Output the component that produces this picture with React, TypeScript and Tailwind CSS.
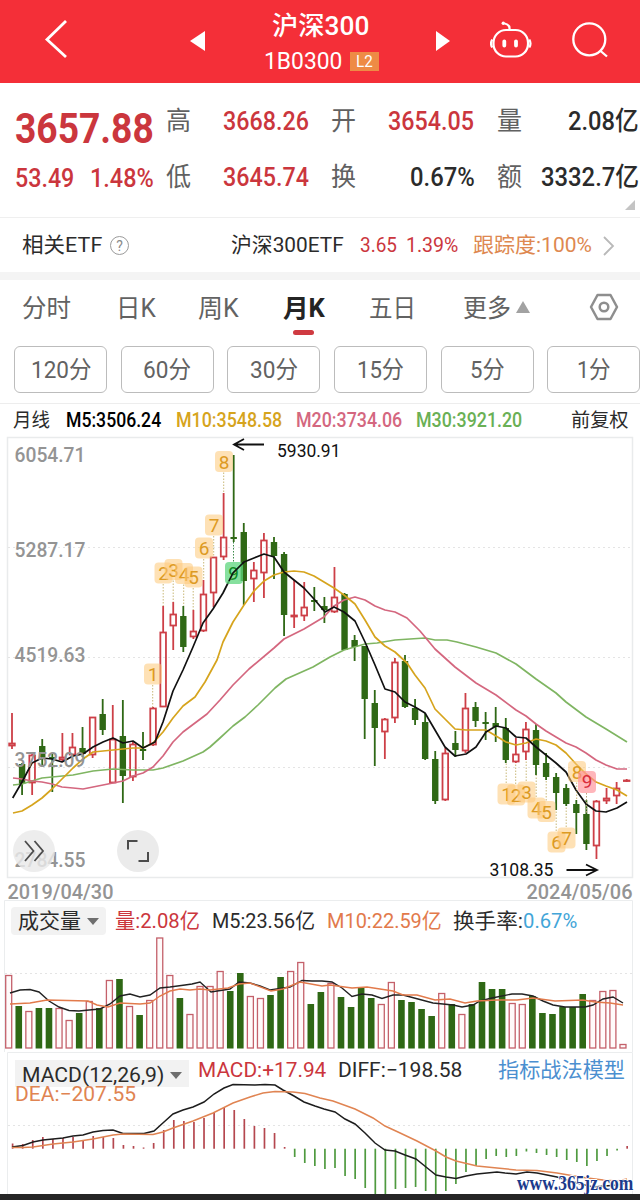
import { useLayoutEffect, useRef, useState, type ReactNode } from 'react'

type Candle = [high: number, top: number, bottom: number, low: number, up: 0 | 1]

const RED = '#cd3f47'
const GREEN = '#2f6815'

const candles: Candle[] = [
  [713, 743, 746, 749, 1], [763, 764, 784, 795, 0], [753, 755, 783, 795, 1], [739, 746, 757, 767, 0],
  [754, 757, 759, 792, 0], [733, 757, 760, 762, 1], [733, 747, 755, 757, 1], [727, 748, 754, 757, 0],
  [717, 717, 755, 758, 1], [699, 714, 730, 735, 0], [705, 739, 783, 783, 1], [700, 736, 776, 803, 0],
  [742, 744, 777, 781, 1], [732, 749, 751, 760, 0], [707, 708, 745, 746, 1], [606, 632, 707, 707, 1],
  [602, 614, 626, 650, 1], [606, 616, 647, 652, 0], [610, 631, 637, 639, 1], [580, 594, 631, 632, 1],
  [557, 557, 593, 607, 1], [493, 537, 557, 560, 1], [455, 537, 539, 542, 0], [523, 532, 581, 605, 0],
  [562, 570, 579, 602, 1], [533, 540, 573, 598, 1], [537, 542, 556, 579, 0], [552, 554, 615, 636, 0],
  [580, 615, 617, 628, 1], [582, 607, 616, 621, 1], [587, 600, 602, 611, 0], [597, 606, 610, 623, 0],
  [567, 597, 612, 613, 1], [593, 594, 650, 650, 0], [635, 640, 647, 661, 0], [646, 646, 699, 739, 0],
  [690, 703, 728, 766, 0], [718, 719, 732, 759, 1], [658, 662, 718, 723, 1], [655, 661, 707, 708, 0],
  [699, 708, 720, 725, 0], [713, 722, 759, 760, 0], [751, 759, 801, 804, 0], [748, 753, 800, 801, 1],
  [731, 743, 750, 757, 0], [693, 708, 751, 753, 1], [702, 707, 721, 727, 0], [712, 722, 724, 740, 0],
  [707, 723, 727, 742, 0], [718, 728, 760, 763, 0], [738, 754, 762, 763, 1], [722, 729, 752, 760, 1],
  [724, 730, 765, 775, 0], [753, 763, 777, 780, 0], [773, 777, 793, 810, 0], [784, 788, 804, 806, 0],
  [800, 804, 813, 834, 0], [800, 814, 844, 850, 0], [800, 801, 846, 859, 1], [788, 798, 801, 804, 1],
  [782, 788, 796, 804, 1], [779, 780, 781, 782, 1],
]

const maLines = [
  {
    color: '#7fb562',
    points: '13,785 22,784 32,781 42,778 52,777 73,775 93,771 113,769 133,770 153,770 163,768 183,761 203,752 210,747 220,738 233,726 245,717 258,705 275,688 286,679 313,667 330,657 344,650 365,644 377,643 395,640 425,638 435,640 447,640 457,642 476,647 496,653 516,664 536,679 556,693 566,702 586,717 606,729 627,742',
  },
  {
    color: '#d4677f',
    points: '13,778 22,779 32,781 42,782 52,784 62,787 73,788 83,789 93,787 103,785 113,783 123,781 133,776 143,773 153,767 163,756 173,742 183,732 195,723 207,714 220,700 233,685 249,669 274,648 284,639 304,629 324,617 334,606 344,600 355,597 365,600 375,606 385,610 395,612 407,618 420,631 435,649 455,667 476,683 496,695 516,710 526,716 536,724 546,731 556,737 566,743 576,747 586,753 596,760 606,765 617,769 627,769',
  },
  {
    color: '#d6a41d',
    points: '13,813 22,811 32,805 42,798 52,789 62,779 73,768 83,759 93,752 103,751 123,749 133,748 143,748 153,743 163,732 173,718 183,706 195,697 205,682 217,660 223,642 233,622 244,605 254,591 264,581 274,575 284,572 294,571 304,572 314,576 324,582 334,588 344,595 355,604 365,620 375,637 385,646 395,652 407,663 415,675 425,688 435,709 445,719 455,729 466,730 486,730 496,736 506,742 516,745 526,743 536,739 546,741 556,745 566,753 576,764 586,774 596,782 606,786 617,790 627,796',
  },
  {
    color: '#111111',
    points: '12.7,798 22,782 32,763 42,758 52,759 62,762 73,756 83,754 93,747 103,742 113,738 123,743 133,741 143,748 155,742 163,722 173,691 183,670 193,647 203,623 213,609 223,593 233,573 244,562 254,558 264,554 274,557 284,572 294,580 304,588 314,599 325,612 334,607 344,612 355,621 365,642 375,665 385,689 395,692 405,702 415,707 425,713 435,730 445,747 455,756 466,754 476,747 486,732 496,726 506,728 516,737 526,738 536,747 546,755 556,763 566,772 576,790 586,804 596,811 606,812 617,808 627,802',
  },
]

// label, centre x, centre y, end of the dotted leader
const markers: [string, number, number, number][] = [
  ['1', 153, 674, 707], ['2', 163.5, 573, 606], ['3', 173.5, 569.5, 602], ['4', 184, 573.5, 606],
  ['5', 193.5, 577, 610], ['6', 204, 548, 580], ['7', 214, 525, 557], ['8', 224, 461.5, 493],
  ['1', 506.5, 794, 763], ['2', 516, 795, 763], ['3', 526.5, 792, 760], ['4', 536.5, 808, 775],
  ['5', 546.5, 811.5, 780], ['6', 556.5, 842, 810], ['7', 566.5, 838, 806], ['8', 577, 771.5, 800],
]

const axisLabels: [string, number][] = [
  ['6054.71', 462], ['5287.17', 557], ['4519.63', 662], ['3752.09', 766.5], ['2784.55', 867],
]

const volumes: [number, 0 | 1][] = [
  [975, 1], [1006, 0], [1011, 1], [1008, 0], [1008, 0], [1008, 1], [1020, 1], [1013, 0], [1001, 1], [1008, 0],
  [980, 1], [979, 0], [1006, 1], [1015, 0], [1000, 1], [937.5, 1], [975, 1], [998, 0], [1014, 1], [986, 1],
  [986, 1], [971, 1], [991, 0], [973, 0], [996, 1], [998, 1], [995, 0], [977, 0], [971, 1], [962, 1],
  [1004, 0], [992, 0], [983, 1], [997, 0], [1007, 0], [987, 0], [998, 0], [1004, 1], [982, 1], [1000, 0],
  [1002, 0], [1009, 0], [1016, 0], [993, 1], [1004, 0], [1014, 1], [1004, 0], [982, 0], [989, 0], [989, 0],
  [1003, 1], [1004, 1], [996, 0], [1013, 0], [1014, 0], [1007, 0], [1007, 0], [994, 0], [1000, 1], [991, 1],
  [990, 1], [1044, 1],
]

const volM5 =
  '10,993 20,990 30,989.5 39,992 49,1001 59,1007 69,1010.5 79,1011 89,1010 100,1009 110,1004 120,996 130,994 140,997 150,995 160,988 170,987 185,985 192,984 200,982 211,992 230,989 239,982 250,983 260,986 270,990 290,987 302,980.5 312,981 322,981 332,982 342,988 352,996.5 362,994 372,995 382,998.5 393,995 403,995 433,1003 453,1005 462,1007 473,1005 480,1001 492,998 512,994 522,994 533,996 543,1001 553,1005 565,1007 585,1007 593,1005 603,999 613,997 623,1003'
const volM10 =
  '10,1004 30,1003 47,1000 88,1001 97,1005 108,1007 120,1003 140,1004 150,1003 160,996 170,991 180,989 190,990 200,989 210,990 228,988 239,984 250,983 271,991 283,989 300,982 322,986 330,985 352,988 367,987 393,991 403,995 417,995 435,1000 450,999 465,1003 477,1001 497,1000 517,1000 533,998 555,1001 583,1000 595,1002 610,1003 623,1005'

const macdBars = [
  1143.5, 1144, 1140, 1137, 1139, 1138, 1137, 1140, 1136, 1137, 1138, 1145, 1146, 1147.5, 1143, 1130, 1120, 1121,
  1122, 1118, 1113, 1108, 1110, 1119, 1126, 1128, 1133, 1147, 1157, 1163, 1166, 1169, 1168, 1176, 1179, 1188, 1194,
  1194, 1189, 1188, 1187, 1191, 1194, 1191, 1184, 1172, 1166, 1159, 1156, 1157, 1156, 1151.5, 1153, 1155, 1157,
  1160, 1162, 1166, 1161, 1156, 1150.5, 1146,
]

const diffLine =
  '12,1147 23,1145.5 33,1142 43,1140 63,1138 73,1136 83,1135 93,1132 103,1130.5 113,1130 123,1133.5 144,1133.5 154,1131 164,1122 173,1114 183,1110 193,1107 204,1102 214,1094 224,1088 233,1084.5 255,1085 265,1084.5 275,1085 283,1090 294,1096 304,1102 315,1106 324,1109 335,1112 345,1119 355,1124 365,1133 375,1143 385,1150 395,1151 405,1155 416,1159 426,1167 436,1175 446,1177 456,1178.5 466,1176 477,1174 497,1172 505,1173 516,1174 527,1172 537,1173 557,1177 577,1183 593,1187 617,1185 627,1183'
const deaLine =
  '12,1147.5 23,1147.5 33,1147 53,1144 73,1142 93,1139 113,1135 123,1134 153,1134.5 163,1132 173,1128 193,1121 213,1113 233,1103 250,1097 263,1093 275,1091.5 293,1092 305,1093.5 320,1098 333,1101 355,1109 373,1118 385,1126 398,1132 417,1141 436,1151 446,1157 456,1161 477,1166 497,1168 516,1170 537,1170.5 557,1173 580,1177 603,1180 617,1181 627,1179'

const periods = [
  ['120分', 60], ['60分', 48], ['30分', 48], ['15分', 47], ['5分', 35], ['1分', 34],
] as const

// Text squeezed or stretched horizontally to a fixed width.
function Fit({ w, className = '', children }: { w: number; className?: string; children: ReactNode }) {
  const ref = useRef<HTMLSpanElement>(null)
  const [scale, setScale] = useState(1)

  useLayoutEffect(() => {
    if (ref.current) setScale(w / ref.current.offsetWidth)
  }, [w])

  return (
    <span className={`inline-block shrink-0 whitespace-nowrap leading-none ${className}`} style={{ width: w }}>
      <span ref={ref} className="inline-block origin-left" style={{ transform: `scaleX(${scale})` }}>
        {children}
      </span>
    </span>
  )
}

function Header() {
  return (
    <header className="flex h-[83px] shrink-0 items-center bg-[#f42f38] text-white">
      <svg className="ml-[44px] mt-[-6px] h-10 w-6" viewBox="0 0 24 40" fill="none" stroke="currentColor" strokeWidth="2.8">
        <path d="M22 2 3 20.500 22 38" />
      </svg>
      <svg className="ml-[122px] mt-[-2px] h-5 w-4" viewBox="0 0 16 20" fill="currentColor">
        <path d="M15 0v20L0 10Z" />
      </svg>
      <div className="ml-[58px] flex w-[116px] flex-col items-start pt-[5px]">
        <Fit w={97} className="ml-2 mt-[-2px] text-[26px] font-medium">沪深300</Fit>
        <div className="mt-[10px] flex items-center">
          <Fit w={78} className="text-[24px]">1B0300</Fit>
          <span className="ml-2 flex h-[19px] w-[29px] items-center justify-center bg-[#ee8b45]">
            <Fit w={17} className="text-[17px]">L2</Fit>
          </span>
        </div>
      </div>
      <svg className="ml-[56px] mt-[-2px] h-5 w-4" viewBox="0 0 16 20" fill="currentColor">
        <path d="M0 0v20l14-10Z" />
      </svg>
      <svg className="ml-[38px] mt-[-3px] h-10 w-[42px]" viewBox="0 0 42 40" fill="none" stroke="currentColor" strokeWidth="2.200">
        <rect x="3.500" y="10" width="34.500" height="26.500" rx="12.500" />
        <path d="M19.500 10c.5-4-1-5.800-5-6.500" />
        <path d="M2.200 19.500c-1.500 2.500-1.500 5.500 0 8M39.300 19.500c1.500 2.500 1.500 5.500 0 8" />
        <circle cx="13.300" cy="3.300" r="1.700" fill="currentColor" stroke="none" />
        <path d="M14.300 21.300v4.200M26 21.300v4.200" strokeWidth="3.800" strokeLinecap="round" />
      </svg>
      <svg className="ml-[39px] mt-[-3px] h-10 w-10" viewBox="0 0 40 40" fill="none" stroke="currentColor" strokeWidth="2.300">
        <circle cx="18.300" cy="19.300" r="16" />
        <path d="m29 30.500 7 6" />
      </svg>
    </header>
  )
}

function Quote() {
  return (
    <section className="relative flex h-[134px] shrink-0 text-[26px] text-[#2b2b2b]">
      <div className="ml-[15px] w-[151px] text-[#cb363d]">
        <Fit w={139} className="mt-[25px] text-[42px] font-bold">3657.88</Fit>
        <div className="mt-[11px] flex">
          <Fit w={59} className="font-medium">53.49</Fit>
          <Fit w={64} className="ml-4 font-medium">1.48%</Fit>
        </div>
      </div>
      <div className="grid auto-rows-[56px] grid-cols-[57px_86px_22px_57px_87px_22px_44px_98px] items-center pt-[10px]">
        <Fit w={25} className="text-[#616161]">高</Fit>
        <Fit w={86} className="font-medium text-[#cb363d]">3668.26</Fit>
        <i />
        <Fit w={25} className="text-[#616161]">开</Fit>
        <Fit w={86} className="font-medium text-[#cb363d]">3654.05</Fit>
        <i />
        <Fit w={25} className="text-[#616161]">量</Fit>
        <Fit w={71} className="justify-self-end font-medium">2.08亿</Fit>
        <Fit w={25} className="text-[#616161]">低</Fit>
        <Fit w={86} className="font-medium text-[#cb363d]">3645.74</Fit>
        <i />
        <Fit w={25} className="text-[#616161]">换</Fit>
        <Fit w={65} className="justify-self-end font-medium">0.67%</Fit>
        <i />
        <Fit w={25} className="text-[#616161]">额</Fit>
        <Fit w={98} className="font-medium">3332.7亿</Fit>
      </div>
      <svg className="absolute bottom-[7px] right-[5px] size-[10px] text-[#c4c4c4]" viewBox="0 0 10 10" fill="currentColor">
        <path d="M10 0v10H0Z" />
      </svg>
    </section>
  )
}

function EtfRow() {
  return (
    <section className="flex h-[63px] shrink-0 items-center border-b-[8px] border-t border-b-[#f4f4f4] border-t-[#efefef] pt-px text-[21px] text-[#2b2b2b]">
      <Fit w={80} className="ml-[22px]">相关ETF</Fit>
      <span className="ml-2 flex size-[19px] items-center justify-center rounded-full border border-[#9b9b9b] text-sm leading-none text-[#8a8a8a]">?</span>
      <Fit w={113} className="ml-[102px]">沪深300ETF</Fit>
      <Fit w={37} className="ml-4 text-[#cb363d]">3.65</Fit>
      <Fit w={52} className="ml-[9px] text-[#cb363d]">1.39%</Fit>
      <Fit w={119} className="ml-[15px] text-[#de8850]">跟踪度:100%</Fit>
      <svg className="ml-[11px] h-5 w-3" viewBox="0 0 12 20" fill="none" stroke="#b9b9b9" strokeWidth="1.800">
        <path d="m1 1 9 9-9 9" />
      </svg>
    </section>
  )
}

function Tabs() {
  return (
    <nav className="flex h-[66px] shrink-0 items-center pb-[9px] text-[25px] text-[#626262]">
      <Fit w={49} className="ml-[22px]">分时</Fit>
      <Fit w={40} className="ml-[45px]">日K</Fit>
      <Fit w={41} className="ml-[42px]">周K</Fit>
      <div className="relative ml-[44px]">
        <Fit w={42} className="font-bold text-[#242424]">月K</Fit>
        <span className="absolute left-[10px] top-[40px] h-[5px] w-[21px] rounded-full bg-[#cf3a41]" />
      </div>
      <Fit w={47} className="ml-[44px]">五日</Fit>
      <Fit w={48} className="ml-[47px]">更多</Fit>
      <svg className="ml-[5px] mt-[-4px] h-3 w-[14px]" viewBox="0 0 14 12" fill="#a2a2a2">
        <path d="m7 0 7 12H0Z" />
      </svg>
      <svg className="ml-[59px] mt-[-4px] h-7 w-[30px]" viewBox="0 0 30 28" fill="none" stroke="#8e8e8e" strokeWidth="2.500" strokeLinejoin="round">
        <path d="M8.500 2h13L28 14l-6.500 12h-13L2 14Z" />
        <circle cx="15" cy="14" r="4.300" />
      </svg>
    </nav>
  )
}

function Periods() {
  return (
    <div className="flex h-[58px] shrink-0 gap-[13.700px] overflow-hidden border-b border-[#ededed] pl-[14px]">
      {periods.map(([label, w]) => (
        <button key={label} type="button" className="flex h-[47px] w-[93px] shrink-0 items-center justify-center rounded-md border border-[#bcbcbc] text-[24px] text-[#626262]">
          <Fit w={w}>{label}</Fit>
        </button>
      ))}
    </div>
  )
}

function MaLegend() {
  return (
    <div className="flex h-[33px] shrink-0 items-center pt-px text-[19.500px] text-[#2b2b2b]">
      <Fit w={37} className="ml-[13px]">月线</Fit>
      <Fit w={95} className="ml-4 font-medium text-black">M5:3506.24</Fit>
      <Fit w={106} className="ml-[15px] font-medium text-[#d6a41d]">M10:3548.58</Fit>
      <Fit w={106} className="ml-[14px] font-medium text-[#d4677f]">M20:3734.06</Fit>
      <Fit w={106} className="ml-[14px] font-medium text-[#6ab055]">M30:3921.20</Fit>
      <Fit w={58} className="ml-[49px]">前复权</Fit>
    </div>
  )
}

function CandleChart() {
  return (
    <svg className="h-[463px] w-full shrink-0 overflow-visible" viewBox="0 437 640 463" fill="none">
      <path d="M7.500 437.500H632.500V877.500H7.500Z" stroke="#e9ebec" strokeWidth="1.500" />
      <path d="M8 547.500H632M8 657.500H632M8 767.500H632" stroke="#e4e4e4" strokeDasharray="2 3" />
      {candles.map(([high, top, bottom, low, up], i) => {
        const x = 12 + i * 10.077
        if (!up) {
          return (
            <g key={i} fill={GREEN}>
              <rect x={x - 0.9} y={high} width="1.8" height={low - high} />
              <rect x={x - 3.2} y={top} width="6.4" height={bottom - top} />
            </g>
          )
        }
        return (
          <g key={i} stroke={RED} strokeWidth="1.800">
            <path d={`M${x} ${high}V${top}M${x} ${bottom}V${low}`} />
            <rect x={x - 2.8} y={top + 0.5} width="5.6" height={Math.max(bottom - top - 1, 0.5)} />
          </g>
        )
      })}
      {maLines.map((l) => (
        <polyline key={l.color} points={l.points} stroke={l.color} strokeWidth="1.700" strokeLinejoin="round" />
      ))}
      {markers.map(([label, x, y, end]) => (
        <g key={`${x}-${y}`}>
          <path d={`M${x - 0.3} ${end > y ? y + 11 : y - 11}V${end}`} stroke="#c9b878" strokeDasharray="1.500 1.500" />
          <rect x={x - 9} y={y - 10.5} width="18" height="21" rx="4" fill="#fdc878" fillOpacity=".55" />
          <text x={x} y={y + 7} textAnchor="middle" fontSize="19" fill="#dd9a22">{label}</text>
        </g>
      ))}
      <path d="M233.500 542V562" stroke="#3e8a4a" strokeDasharray="1.500 1.500" />
      <rect x="225" y="562" width="18" height="22" rx="4" fill="#5ed67e" fillOpacity=".75" />
      <text x="233.500" y="580" textAnchor="middle" fontSize="19" fill="#0f8a24">9</text>
      <path d="M229 581 233 573 244 562" stroke="#111" strokeWidth="1.500" />
      <path d="M586.500 793V814" stroke="#b9a07a" strokeDasharray="1.500 1.500" />
      <rect x="578" y="771" width="18" height="22" rx="4" fill="#ff8f96" fillOpacity=".65" />
      <text x="587" y="788" textAnchor="middle" fontSize="19" fill="#d92c3c">9</text>

      {axisLabels.map(([label, y]) => (
        <text key={label} x="14.500" y={y} fontSize="20" fontWeight="500" fill="#949494" textLength="71" lengthAdjust="spacingAndGlyphs">{label}</text>
      ))}
      <g stroke="#111" strokeWidth="1.800">
        <path d="M264 444.500H234M244 439l-10 5.500 10 5.500" />
        <path d="M566.500 870H597M586 864.500l11 5.500-11 5.500" />
      </g>
      <text x="277" y="456.500" fontSize="18" fill="#111" textLength="63.500" lengthAdjust="spacingAndGlyphs">5930.91</text>
      <text x="489.500" y="876" fontSize="18" fill="#111" textLength="64" lengthAdjust="spacingAndGlyphs">3108.35</text>

      <circle cx="34" cy="851" r="21" fill="#e9e9e9" fillOpacity=".82" />
      <path d="m25 841 8.500 10-8.500 10M34.500 841l8.500 10-8.500 10" stroke="#4c4c4c" strokeWidth="1.800" />
      <circle cx="138" cy="851" r="21" fill="#ebebeb" />
      <path d="M128 849.500V841h9.500M148 852v9h-9.500" stroke="#4c4c4c" strokeWidth="2" />

      <text x="7.500" y="898.500" fontSize="19.500" fontWeight="500" fill="#949494" textLength="106" lengthAdjust="spacingAndGlyphs">2019/04/30</text>
      <text x="526.500" y="898.500" fontSize="19.500" fontWeight="500" fill="#949494" textLength="106" lengthAdjust="spacingAndGlyphs">2024/05/06</text>
    </svg>
  )
}

function DownMark() {
  return (
    <svg className="h-[7px] w-3 text-[#6e6e6e]" viewBox="0 0 12 7" fill="currentColor">
      <path d="M0 0h12L6 7Z" />
    </svg>
  )
}

function VolumePanel() {
  return (
    <section className="relative h-[152px] shrink-0">
      <svg className="absolute inset-0 h-[152px] w-full" viewBox="0 900 640 152" fill="none">
        <path d="M4.500 1052V900.500H632.500V1052" stroke="#ebedee" />
        <path d="M5 973.500H632" stroke="#e4e4e4" strokeDasharray="2 3" />
        {volumes.map(([top, up], i) => {
          const x = 8.7 + i * 10.07
          return up ? (
            <rect key={i} x={x - 3} y={top + 0.5} width="6" height={1047.5 - top} stroke="#c4606a" strokeWidth="1.300" fill="#fffafa" />
          ) : (
            <rect key={i} x={x - 3.3} y={top} width="6.6" height={1048.5 - top} fill={GREEN} />
          )
        })}
        <polyline points={volM5} stroke="#222" strokeWidth="1.400" />
        <polyline points={volM10} stroke="#e27a4b" strokeWidth="1.400" />
      </svg>
      <div className="relative flex h-[42px] items-center pl-[11px] text-[21px] text-[#2b2b2b]">
        <div className="flex h-7 w-[95px] items-center gap-1.5 rounded-sm bg-[#f2f2f2] pl-[7px]">
          <Fit w={63}>成交量</Fit>
          <DownMark />
        </div>
        <Fit w={85} className="ml-[9px] text-[#cb363d]">量:2.08亿</Fit>
        <Fit w={103} className="ml-3">M5:23.56亿</Fit>
        <Fit w={115} className="ml-3 text-[#e27a4b]">M10:22.59亿</Fit>
        <Fit w={70} className="ml-[11px]">换手率:</Fit>
        <Fit w={54} className="text-[#42a5d8]">0.67%</Fit>
      </div>
    </section>
  )
}

function MacdPanel() {
  return (
    <section className="relative h-[142px] shrink-0 overflow-hidden">
      <svg className="absolute inset-0 h-[142px] w-full" viewBox="0 1052 640 142" fill="none">
        <path d="M7.500 1194V1052.500H632.500V1194" stroke="#ebedee" />
        <path d="M8 1125.500H632" stroke="#e4e4e4" strokeDasharray="2 3" />
        {macdBars.map((y, i) => (
          <path key={i} d={`M${12.6 + i * 10.075} 1148.700V${y}`} stroke={y < 1148.7 ? '#b5474f' : '#4f9a3f'} strokeWidth="1.700" />
        ))}
        <polyline points={diffLine} stroke="#1d1d1d" strokeWidth="1.500" />
        <polyline points={deaLine} stroke="#e08452" strokeWidth="1.500" />
      </svg>
      <div className="relative flex h-[36px] items-center pl-[15px] pt-px text-[21px] text-[#2b2b2b]">
        <div className="mt-[5px] flex h-[27px] w-[174px] items-center gap-1.5 bg-[#f2f2f2] pl-[7px] pt-1">
          <Fit w={142}>MACD(12,26,9)</Fit>
          <DownMark />
        </div>
        <Fit w={128} className="ml-[9px] text-[#cb363d]">MACD:+17.94</Fit>
        <Fit w={124} className="ml-3">DIFF:−198.58</Fit>
        <Fit w={127} className="ml-[36px] text-[#4b8fd0]">指标战法模型</Fit>
      </div>
      <Fit w={121} className="relative ml-[15px] mt-[-4px] align-top text-[21px] text-[#e08452]">DEA:−207.55</Fit>
      <Fit
        w={116}
        className="absolute bottom-px right-[7px] font-['Liberation_Serif',serif] text-[20px] font-bold text-[#1b3a8c] [text-shadow:1px_0_#fff,-1px_0_#fff,0_1px_#fff,0_-1px_#fff]"
      >
        www.365jz.com
      </Fit>
    </section>
  )
}

export default function App() {
  return (
    <div className="flex h-[1200px] w-[640px] flex-col overflow-hidden bg-white font-[Roboto,'Noto_Sans_CJK_SC',sans-serif]">
      <Header />
      <Quote />
      <EtfRow />
      <Tabs />
      <Periods />
      <MaLegend />
      <CandleChart />
      <VolumePanel />
      <MacdPanel />
      <div className="h-[6px] shrink-0 bg-[#262626]" />
    </div>
  )
}
